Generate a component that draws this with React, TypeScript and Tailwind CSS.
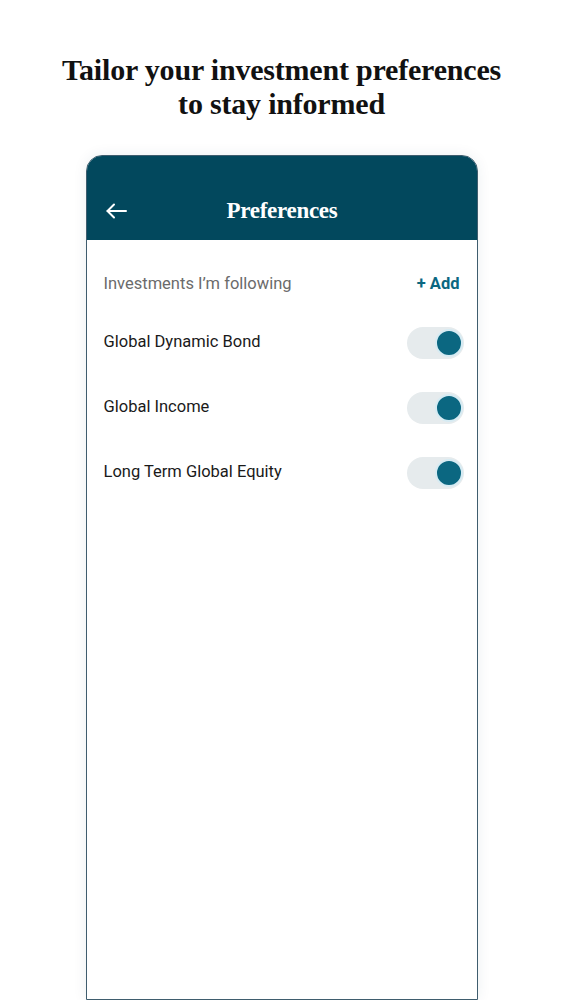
import React from "react";

const rows = ["Global Dynamic Bond", "Global Income", "Long Term Global Equity"];

function Toggle() {
  return (
    <div className="flex h-[32px] w-[57px] items-center justify-end rounded-full bg-[#e6ebed] pr-[1px]">
      <div className="h-[28px] w-[28px] rounded-full border-[2px] border-[#d6ebf3] bg-[#0b6781]" />
    </div>
  );
}

export default function App() {
  return (
    <div className="flex h-[1000px] flex-col items-center overflow-hidden bg-white">
      <h1
        className="mt-[53px] text-center text-[30px] font-bold leading-[34px] text-[#111] tracking-[-0.2px]"
        style={{ fontFamily: '"Liberation Serif", serif' }}
      >
        Tailor your investment preferences
        <br />
        to stay informed
      </h1>
      <div className="mt-[34px] flex w-[392px] flex-1 flex-col rounded-t-[16px] border border-[#3f5d6e] bg-white shadow-[0_0_14px_rgba(0,60,90,0.08)]">
        <div className="flex h-[84px] items-center rounded-t-[15px] bg-[#02485d] pl-[19px] pr-[18px] pt-[26px]">
          <svg width="21" height="16" viewBox="0 0 21 16" fill="none" stroke="white" strokeWidth="2" strokeLinecap="round" strokeLinejoin="round">
            <path d="M20 8H1.5" />
            <path d="M8 1.5L1.5 8 8 14.5" />
          </svg>
          <div
            className="flex-1 pr-[21px] text-center text-[23px] font-bold text-white tracking-[-0.3px]"
            style={{ fontFamily: '"Liberation Serif", serif' }}
          >
            Preferences
          </div>
        </div>
        <div className="flex flex-col pl-[17px] pr-[13px]" style={{ fontFamily: 'Roboto, sans-serif' }}>
          <div className="mt-[32px] flex items-center justify-between pr-[4px]">
            <span className="text-[16.5px] text-[#6b6b6b]">Investments I’m following</span>
            <span className="text-[16.5px] font-bold text-[#0b6781]">+ Add</span>
          </div>
          <div className="mt-[30px] flex flex-col gap-[33px]">
            {rows.map((r) => (
              <div key={r} className="flex items-center justify-between">
                <span className="text-[16.5px] text-[#1a1a1a]">{r}</span>
                <Toggle />
              </div>
            ))}
          </div>
        </div>
      </div>
    </div>
  );
}
